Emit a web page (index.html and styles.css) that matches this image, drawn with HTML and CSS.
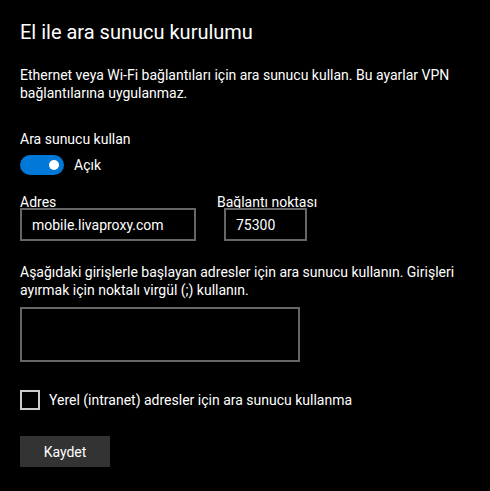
FILE: index.html
```html
<!DOCTYPE html>
<html lang="tr">

<head>
    <meta charset="UTF-8">
    <meta name="viewport" content="width=device-width, initial-scale=1.0">
    <title>El ile ara sunucu kurulumu</title>
    <link rel="stylesheet" href="styles.css">
</head>

<body>
    <div class="page">
        <h1 class="title">El ile ara sunucu kurulumu</h1>
        <p class="desc">Ethernet veya Wi-Fi bağlantıları için ara sunucu kullan. Bu ayarlar VPN bağlantılarına uygulanmaz.</p>

        <div class="label">Ara sunucu kullan</div>
        <div class="toggle-row">
            <div class="toggle"></div>
            <span>Açık</span>
        </div>

        <div class="fields">
            <div class="field">
                <div class="field-label">Adres</div>
                <input class="box address" type="text" value="mobile.livaproxy.com">
            </div>
            <div class="field port-field">
                <div class="field-label">Bağlantı noktası</div>
                <input class="box port" type="text" value="75300">
            </div>
        </div>

        <p class="desc desc-2">Aşağıdaki girişlerle başlayan adresler için ara sunucu kullanın. Girişleri ayırmak için noktalı virgül (;) kullanın.</p>
        <textarea class="box exceptions"></textarea>

        <label class="check-row">
            <span class="check"></span>
            <span>Yerel (intranet) adresler için ara sunucu kullanma</span>
        </label>

        <button class="save-btn">Kaydet</button>
    </div>
</body>

</html>
```

FILE: styles.css
```css
body {
    margin: 0;
    background-color: #000;
    color: #fff;
    font-family: Roboto, "Noto Sans", sans-serif;
    font-size: 14px;
}

.page {
    display: flex;
    flex-direction: column;
    align-items: flex-start;
    padding: 0 20px;
}

.title {
    margin: 18px 0 0;
    font-size: 20px;
    font-weight: normal;
    line-height: 28px;
}

.desc {
    margin: 20px 0 0;
    line-height: 18px;
}

.label {
    margin-top: 27px;
    line-height: 20px;
}

.toggle-row {
    display: flex;
    align-items: center;
    gap: 10px;
    margin-top: 6px;
}

.toggle {
    position: relative;
    width: 44px;
    height: 20px;
    border-radius: 10px;
    background-color: #0078d7;
}

/* белая ручка переключателя */
.toggle::after {
    content: "";
    position: absolute;
    right: 5px;
    top: 5px;
    width: 10px;
    height: 10px;
    border-radius: 50%;
    background-color: #fff;
}

.fields {
    display: flex;
    margin-top: 21px;
}

.field {
    display: flex;
    flex-direction: column;
    align-items: flex-start;
}

.field-label {
    line-height: 12px;
}

.port-field {
    margin-left: 21px;
}

.box {
    box-sizing: border-box;
    margin: 0;
    padding: 0 10px;
    background-color: #000;
    border: 2px solid #666;
    color: #fff;
    font-family: inherit;
    font-size: 14px;
    outline: none;
}

.address {
    width: 176px;
    height: 33px;
}

.port {
    width: 83px;
    height: 33px;
    margin-left: 7px;
}

.desc-2 {
    margin-top: 22px;
}

.exceptions {
    display: block;
    width: 280px;
    height: 55px;
    margin-top: 8px;
    resize: none;
}

.check-row {
    display: flex;
    align-items: center;
    gap: 9px;
    margin-top: 28px;
}

.check {
    box-sizing: border-box;
    width: 20px;
    height: 20px;
    border: 2px solid #ccc;
}

.save-btn {
    width: 90px;
    height: 31px;
    margin-top: 26px;
    padding: 0;
    background-color: #333;
    border: none;
    color: #fff;
    font-family: inherit;
    font-size: 14px;
}
```
